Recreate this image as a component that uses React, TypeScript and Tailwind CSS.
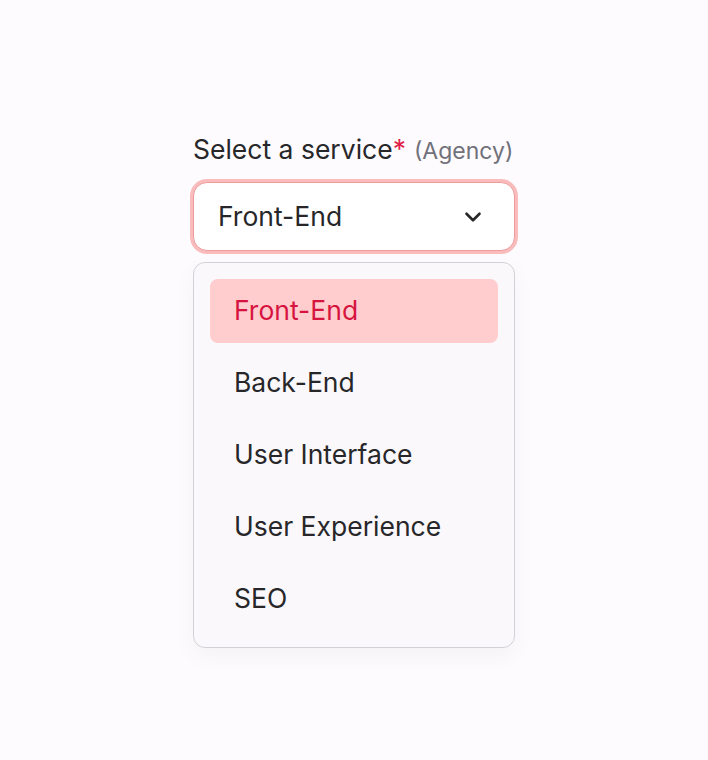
import { ChevronDown } from "lucide-react";

const services = ["Front-End", "Back-End", "User Interface", "User Experience", "SEO"];

export default function App() {
  const selected = "Front-End";

  return (
    <div className="min-h-screen w-full bg-[#fdfbfe] font-['Inter',sans-serif] text-[#27272a]">
      <div className="mx-auto w-[322px] pt-[131px]">
        {/* Label */}
        <label className="flex items-baseline whitespace-nowrap text-[26.5px] leading-[36px]">
          <span>Select a service</span>
          <span className="text-[#e11d48]">*</span>
          <span className="ml-[8px] text-[23px] text-[#71717a]">(Agency)</span>
        </label>

        {/* Trigger */}
        <button className="mt-[13px] flex h-[69px] w-full items-center justify-between rounded-[14px] border border-[#f09a9a] bg-white pl-6 pr-7 text-[26.5px] ring-[3px] ring-[#f9bcbc]">
          <span>{selected}</span>
          <ChevronDown className="h-[26px] w-[26px] text-[#27272a]" strokeWidth={2.4} />
        </button>

        {/* Options */}
        <ul className="mt-[11px] flex flex-col gap-2 rounded-[12px] border border-[#d2d2d6] bg-[#faf8fb] p-4 shadow-[0_8px_24px_rgba(0,0,0,0.04)]">
          {services.map((s) => (
            <li
              key={s}
              className={
                s === selected
                  ? "flex h-[64px] items-center rounded-[8px] bg-[#ffcdcd] px-6 text-[26.5px] text-[#d7143f]"
                  : "flex h-[64px] items-center rounded-[8px] px-6 text-[26.5px]"
              }
            >
              {s}
            </li>
          ))}
        </ul>
      </div>
    </div>
  );
}
